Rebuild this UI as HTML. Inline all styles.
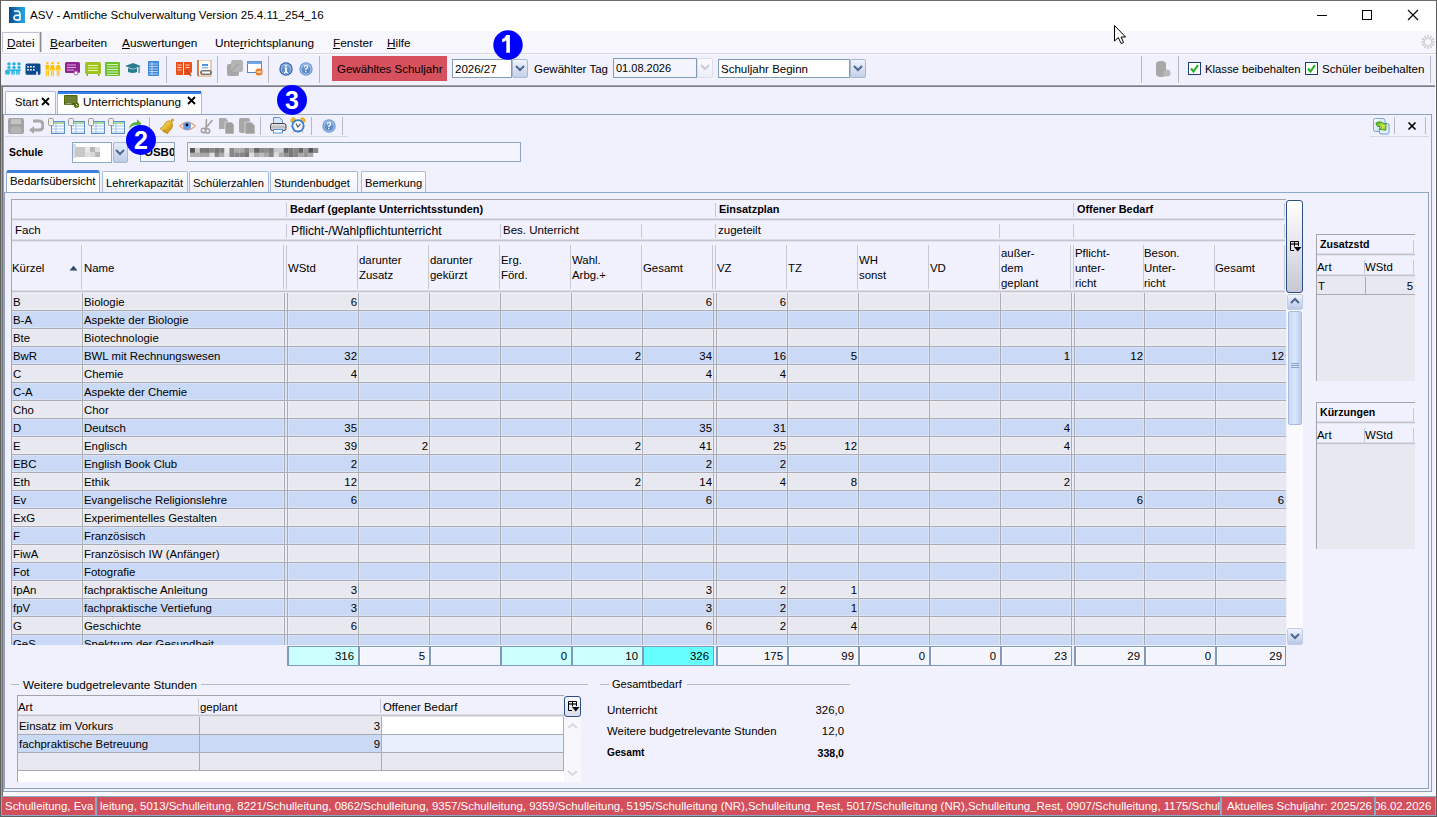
<!DOCTYPE html><html><head><meta charset="utf-8"><style>
html,body{margin:0;padding:0;}
body{width:1437px;height:817px;position:relative;overflow:hidden;background:#f1f1fd;font-family:"Liberation Sans",sans-serif;font-size:11.5px;color:#000;}
div{box-sizing:border-box;}
</style></head><body>
<div style="position:absolute;left:0px;top:0px;width:1437px;height:1px;background:#6a6a6a"></div>
<div style="position:absolute;left:0px;top:0px;width:1px;height:817px;background:#5e5e5e"></div>
<div style="position:absolute;left:1436px;top:0px;width:1px;height:817px;background:#5e5e5e"></div>
<div style="position:absolute;left:0px;top:816px;width:1437px;height:1px;background:#5e5e5e"></div>
<div style="position:absolute;left:1px;top:87px;width:1px;height:729px;background:#a0a0a0"></div>
<div style="position:absolute;left:2px;top:87px;width:1px;height:729px;background:#707070"></div>
<div style="position:absolute;left:1435px;top:87px;width:1px;height:729px;background:#fafafa"></div>
<div style="position:absolute;left:1px;top:1px;width:1435px;height:30px;background:#ffffff"></div>
<svg style="position:absolute;left:9px;top:7px" width="16" height="16" viewBox="0 0 16 16"><defs><linearGradient id="ag" x1="0" x2="1"><stop offset="0" stop-color="#0a4a8c"/><stop offset="1" stop-color="#22a8e6"/></linearGradient></defs><rect width="16" height="16" fill="url(#ag)"/><path d="M5 4.2 Q11 3 11 7 V13.5 M11 8.5 Q5 7.5 5 10.8 Q5 14 11 12.5" stroke="#fff" stroke-width="1.6" fill="none"/></svg>
<div style="position:absolute;left:30px;top:8px;font-size:11.6px;line-height:13px;color:#000;white-space:nowrap;">ASV - Amtliche Schulverwaltung Version 25.4.11_254_16</div>
<svg style="position:absolute;left:1316px;top:8px" width="110" height="16" viewBox="0 0 110 16"><line x1="1" y1="7.5" x2="11" y2="7.5" stroke="#000" stroke-width="1"/><rect x="46.5" y="2.5" width="9" height="9" fill="none" stroke="#000"/><path d="M92 2 L102 12 M102 2 L92 12" stroke="#000" stroke-width="1.1"/></svg>
<div style="position:absolute;left:1px;top:31px;width:1435px;height:22px;background:#f7f7fd"></div>
<div style="position:absolute;left:2px;top:32px;width:38px;height:20px;background:#fbfbfe;border:1px solid #c0c2d4;border-bottom:none;border-right-color:#d8d8e4;box-shadow:1px 0 0 #8c8c94,2px 0 0 #c8c8d0"></div>
<div style="position:absolute;left:7px;top:36px;font-size:11.8px;line-height:14px;color:#000;white-space:nowrap;"><u>D</u>atei</div>
<div style="position:absolute;left:50px;top:36px;font-size:11.8px;line-height:14px;color:#000;white-space:nowrap;"><u>B</u>earbeiten</div>
<div style="position:absolute;left:122px;top:36px;font-size:11.8px;line-height:14px;color:#000;white-space:nowrap;"><u>A</u>uswertungen</div>
<div style="position:absolute;left:215px;top:36px;font-size:11.8px;line-height:14px;color:#000;white-space:nowrap;">Unte<u>r</u>richtsplanung</div>
<div style="position:absolute;left:333px;top:36px;font-size:11.8px;line-height:14px;color:#000;white-space:nowrap;"><u>F</u>enster</div>
<div style="position:absolute;left:387px;top:36px;font-size:11.8px;line-height:14px;color:#000;white-space:nowrap;"><u>H</u>ilfe</div>
<svg style="position:absolute;left:1419px;top:33px" width="18" height="18" viewBox="0 0 18 18"><line x1="9" y1="2" x2="9" y2="6" stroke="#ccc" stroke-width="1.5" transform="rotate(0 9 9)"/><line x1="9" y1="2" x2="9" y2="6" stroke="#ccc" stroke-width="1.5" transform="rotate(30 9 9)"/><line x1="9" y1="2" x2="9" y2="6" stroke="#ccc" stroke-width="1.5" transform="rotate(60 9 9)"/><line x1="9" y1="2" x2="9" y2="6" stroke="#ccc" stroke-width="1.5" transform="rotate(90 9 9)"/><line x1="9" y1="2" x2="9" y2="6" stroke="#ccc" stroke-width="1.5" transform="rotate(120 9 9)"/><line x1="9" y1="2" x2="9" y2="6" stroke="#ccc" stroke-width="1.5" transform="rotate(150 9 9)"/><line x1="9" y1="2" x2="9" y2="6" stroke="#ccc" stroke-width="1.5" transform="rotate(180 9 9)"/><line x1="9" y1="2" x2="9" y2="6" stroke="#ccc" stroke-width="1.5" transform="rotate(210 9 9)"/><line x1="9" y1="2" x2="9" y2="6" stroke="#ccc" stroke-width="1.5" transform="rotate(240 9 9)"/><line x1="9" y1="2" x2="9" y2="6" stroke="#ccc" stroke-width="1.5" transform="rotate(270 9 9)"/><line x1="9" y1="2" x2="9" y2="6" stroke="#ccc" stroke-width="1.5" transform="rotate(300 9 9)"/><line x1="9" y1="2" x2="9" y2="6" stroke="#ccc" stroke-width="1.5" transform="rotate(330 9 9)"/></svg>
<div style="position:absolute;left:1px;top:53px;width:1435px;height:1px;background:#d8d6e6"></div>
<div style="position:absolute;left:1px;top:54px;width:1435px;height:1px;background:#fdfdff"></div>
<div style="position:absolute;left:1px;top:55px;width:1435px;height:30px;background:#f1f1fd"></div>
<div style="position:absolute;left:1px;top:85px;width:1434px;height:1px;background:#a0a0a8"></div>
<div style="position:absolute;left:1px;top:86px;width:1434px;height:1px;background:#7c7c84"></div>
<div style="position:absolute;left:166px;top:56px;width:1px;height:27px;background:#b8b8c0"></div>
<div style="position:absolute;left:217px;top:56px;width:1px;height:27px;background:#b8b8c0"></div>
<div style="position:absolute;left:268px;top:56px;width:1px;height:27px;background:#b8b8c0"></div>
<div style="position:absolute;left:319px;top:56px;width:1px;height:27px;background:#b8b8c0"></div>
<div style="position:absolute;left:1141px;top:56px;width:1px;height:27px;background:#b8b8c0"></div>
<div style="position:absolute;left:1178px;top:56px;width:1px;height:27px;background:#b8b8c0"></div>
<div style="position:absolute;left:1430px;top:56px;width:1px;height:27px;background:#b8b8c0"></div>
<svg style="position:absolute;left:5px;top:61px" width="16" height="16" viewBox="0 0 16 16"><defs><linearGradient id="pcy" x1="0" y1="0" x2="0" y2="1"><stop offset="0" stop-color="#22b0dc"/><stop offset="0.55" stop-color="#22b0dc"/><stop offset="1" stop-color="#5cc8e8"/></linearGradient></defs><g fill="url(#pcy)"><circle cx="4" cy="3" r="1.8"/><circle cx="9" cy="3" r="1.8"/><circle cx="14" cy="3" r="1.8"/><circle cx="4" cy="6.6" r="1.7"/><circle cx="9" cy="6.6" r="1.7"/><circle cx="14" cy="6.6" r="1.7"/><rect x="0.2" y="9" width="4.6" height="4.8" rx="1"/><rect x="2" y="8.4" width="13.8" height="1.8"/><rect x="6.3" y="9.5" width="1.5" height="4.3"/><rect x="8.3" y="9.5" width="1.5" height="4.3"/><rect x="11.2" y="9.5" width="1.5" height="4.3"/><rect x="13.2" y="9.5" width="1.5" height="4.3"/></g></svg>
<svg style="position:absolute;left:25px;top:61px" width="16" height="16" viewBox="0 0 16 16"><path d="M2 2.5 H14 Q15.5 2.5 15.5 4 V12.5 Q15.5 13.8 14.2 13.8 H12.8 V10.6 H11.2 V13.8 H2 Q0.5 13.8 0.5 12.3 V4 Q0.5 2.5 2 2.5 Z" fill="#0c4a8e"/><g fill="#fff"><rect x="2.2" y="5" width="1.6" height="1.6"/><rect x="5.1" y="5" width="1.6" height="1.6"/><rect x="8" y="5" width="1.6" height="1.6"/><rect x="2.2" y="8" width="1.6" height="1.6"/><rect x="5.1" y="8" width="1.6" height="1.6"/><rect x="8" y="8" width="1.6" height="1.6"/></g></svg>
<svg style="position:absolute;left:45px;top:61px" width="16" height="16" viewBox="0 0 16 16"><defs><linearGradient id="pyl" x1="0" y1="0" x2="0" y2="1"><stop offset="0" stop-color="#fcc208"/><stop offset="0.6" stop-color="#fcc208"/><stop offset="1" stop-color="#fde080"/></linearGradient></defs><g fill="url(#pyl)"><rect x="1.2" y="1" width="2.4" height="2.4" rx="0.8"/><rect x="6.2" y="1" width="2.4" height="2.4" rx="0.8"/><rect x="12" y="1" width="2.4" height="2.4" rx="0.8"/><rect x="0.5" y="4" width="3.8" height="5.5"/><rect x="0.8" y="9.5" width="1.4" height="6"/><rect x="2.6" y="9.5" width="1.4" height="6"/><path d="M5.8 4 H9 L10.2 10 H4.6 Z"/><rect x="6" y="10" width="1.2" height="5.5"/><rect x="7.6" y="10" width="1.2" height="5.5"/><path d="M11.6 4 H14.8 L16 10 H10.4 Z"/><rect x="11.8" y="10" width="1.2" height="5.5"/><rect x="13.4" y="10" width="1.2" height="5.5"/></g></svg>
<svg style="position:absolute;left:65px;top:61px" width="16" height="16" viewBox="0 0 16 16"><rect x="0" y="1" width="15" height="11" rx="1.5" fill="#8e2590"/><g stroke="#e0a8e0" stroke-width="1"><line x1="2" y1="4" x2="11" y2="4"/><line x1="2" y1="6.5" x2="11" y2="6.5"/><line x1="2" y1="9" x2="9" y2="9"/></g><circle cx="11" cy="12" r="2" fill="#fff" stroke="#b060b0"/></svg>
<svg style="position:absolute;left:85px;top:61px" width="16" height="16" viewBox="0 0 16 16"><rect x="0" y="1" width="16" height="12" rx="1.5" fill="#a0c41e"/><g stroke="#e8f4b0"><line x1="3" y1="4.5" x2="13" y2="4.5"/><line x1="3" y1="7" x2="13" y2="7"/><line x1="3" y1="9.5" x2="13" y2="9.5"/></g><rect x="1.5" y="13" width="1.5" height="2" fill="#88a818"/><rect x="13" y="13" width="1.5" height="2" fill="#88a818"/></svg>
<svg style="position:absolute;left:105px;top:61px" width="16" height="16" viewBox="0 0 16 16"><rect x="0" y="1" width="15" height="14" rx="1" fill="#6cc02a"/><g stroke="#d8f0c0"><line x1="2" y1="3.5" x2="13" y2="3.5"/><line x1="2" y1="6" x2="13" y2="6"/><line x1="2" y1="8.5" x2="13" y2="8.5"/><line x1="2" y1="11" x2="13" y2="11"/><line x1="2" y1="13.5" x2="13" y2="13.5"/></g></svg>
<svg style="position:absolute;left:125px;top:61px" width="16" height="16" viewBox="0 0 16 16"><path d="M0 5 L8 2 L16 5 L8 8 Z" fill="#2a7d8e"/><path d="M3 7 V11 Q8 13 12 11 V7 L8 8.5 Z" fill="#2a7d8e"/><rect x="13.5" y="6" width="1.2" height="6" fill="#2a7d8e"/></svg>
<svg style="position:absolute;left:148px;top:61px" width="11" height="15" viewBox="0 0 11 15"><rect x="0" y="0" width="11" height="15" rx="1" fill="#3d86d6"/><g stroke="#cfe2f8" stroke-width="0.8"><line x1="1" y1="3" x2="10" y2="3"/><line x1="1" y1="5.5" x2="10" y2="5.5"/><line x1="1" y1="8" x2="10" y2="8"/><line x1="1" y1="10.5" x2="10" y2="10.5"/><line x1="1" y1="13" x2="10" y2="13"/><line x1="4" y1="1" x2="4" y2="14"/></g></svg>
<svg style="position:absolute;left:176px;top:61px" width="16" height="16" viewBox="0 0 16 16"><path d="M0 1 h7 v13 h-6 q-1 0 -1 -1z M8 1 h7 q1 0 1 1 v9 l-3 3 h-5z" fill="#e9501c"/><g stroke="#fbd0c0"><line x1="1.5" y1="4" x2="5.5" y2="4"/><line x1="1.5" y1="6.5" x2="5.5" y2="6.5"/><line x1="1.5" y1="9" x2="5.5" y2="9"/><line x1="9.5" y1="4" x2="13.5" y2="4"/><line x1="9.5" y1="6.5" x2="13.5" y2="6.5"/></g><path d="M10 9 L15 15" stroke="#c04818" stroke-width="1.2"/></svg>
<svg style="position:absolute;left:197px;top:60px" width="16" height="17" viewBox="0 0 16 17"><rect x="1" y="0" width="13" height="16" fill="#fff" stroke="#d8a060"/><line x1="1" y1="0" x2="1" y2="16" stroke="#d06020" stroke-width="1.5"/><rect x="5" y="4" width="6" height="2" fill="#5090e0"/><rect x="5" y="7" width="6" height="1.5" fill="#90b8f0"/><rect x="3" y="10" width="12" height="5" rx="2.5" fill="#777"/><rect x="5" y="11.5" width="8" height="2" fill="#fff"/></svg>
<svg style="position:absolute;left:227px;top:60px" width="16" height="16" viewBox="0 0 16 16"><rect x="0" y="4" width="12" height="12" rx="2" fill="#a8a8a8"/><rect x="4" y="0" width="12" height="12" rx="2" fill="#b4b4b4"/><path d="M4 12 Q8 6 12 4" stroke="#9a9a9a" fill="none"/></svg>
<svg style="position:absolute;left:247px;top:60px" width="17" height="17" viewBox="0 0 17 17"><rect x="0.5" y="1.5" width="14" height="11" fill="#fff" stroke="#4a88d0"/><rect x="0.5" y="1.5" width="14" height="2.5" fill="#7aa8e0"/><circle cx="12" cy="12" r="3.6" fill="#f07820"/><rect x="9.8" y="11.3" width="4.4" height="1.4" fill="#fff"/></svg>
<svg style="position:absolute;left:279px;top:62px" width="14" height="14" viewBox="0 0 14 14"><defs><linearGradient id="ig27962" x1="0" y1="0" x2="0" y2="1"><stop offset="0" stop-color="#86acdc"/><stop offset="1" stop-color="#4a78b8"/></linearGradient></defs><circle cx="7" cy="7" r="6.7" fill="#3464b0"/><circle cx="7" cy="7" r="5.4" fill="#c0d6ee"/><circle cx="7" cy="7" r="4.7" fill="url(#ig27962)"/><rect x="6.1" y="3" width="1.8" height="1.5" fill="#fff"/><path d="M5.8 5.6 H7.9 V9.7 H8.9 V10.9 H5.1 V9.7 H6.1 V6.7 H5.8 Z" fill="#fff"/></svg>
<svg style="position:absolute;left:299px;top:62px" width="14" height="14" viewBox="0 0 14 14"><defs><linearGradient id="ig29962" x1="0" y1="0" x2="0" y2="1"><stop offset="0" stop-color="#86acdc"/><stop offset="1" stop-color="#4a78b8"/></linearGradient></defs><circle cx="7" cy="7" r="6.7" fill="#6c9ad8"/><circle cx="7" cy="7" r="5.4" fill="#c0d6ee"/><circle cx="7" cy="7" r="4.7" fill="url(#ig29962)"/><path d="M4.8 5.2 Q4.8 2.9 7 2.9 Q9.3 2.9 9.3 5 Q9.3 6.3 7.9 6.9 Q7.3 7.2 7.3 8.2 H6.1 Q6.1 6.6 7.2 6 Q8 5.6 8 5 Q8 4.1 7 4.1 Q6 4.1 6 5.2 Z" fill="#fff"/><rect x="6.1" y="9" width="1.3" height="1.4" fill="#fff"/></svg>
<div style="position:absolute;left:332px;top:56px;width:115px;height:25px;background:#d6505e"></div>
<div style="position:absolute;left:337px;top:63px;font-size:11.5px;line-height:13px;color:#000;white-space:nowrap;">Gewähltes Schuljahr</div>
<div style="position:absolute;left:452px;top:59px;width:60px;height:19px;background:#fff;border:1px solid #7f9db9"></div>
<div style="position:absolute;left:455px;top:63px;font-size:11.5px;line-height:13px;color:#000;white-space:nowrap;">2026/27</div>
<div style="position:absolute;left:512px;top:59px;width:16px;height:19px;background:linear-gradient(#eef2fb,#c4d0ea);border:1px solid #a8b8d0;border-radius:2px"></div>
<svg style="position:absolute;left:515px;top:64px" width="10" height="8" viewBox="0 0 10 8"><path d="M1 2 L5 6 L9 2" stroke="#4a6890" stroke-width="2" fill="none"/></svg>
<div style="position:absolute;left:534px;top:63px;font-size:11.5px;line-height:13px;color:#000;white-space:nowrap;">Gewählter Tag</div>
<div style="position:absolute;left:613px;top:58px;width:84px;height:20px;background:#f4f4fc;border:1px solid #7f9db9"></div>
<div style="position:absolute;left:616px;top:62px;font-size:11.0px;line-height:13px;color:#000;white-space:nowrap;">01.08.2026</div>
<div style="position:absolute;left:697px;top:58px;width:16px;height:20px;background:linear-gradient(#fbfbff,#eceef8);border:1px solid #dcdfe8;border-radius:2px"></div>
<svg style="position:absolute;left:700px;top:63px" width="10" height="8" viewBox="0 0 10 8"><path d="M1 2 L5 6 L9 2" stroke="#c8ccd8" stroke-width="2" fill="none"/></svg>
<div style="position:absolute;left:718px;top:59px;width:132px;height:19px;background:#fff;border:1px solid #7f9db9"></div>
<div style="position:absolute;left:721px;top:63px;font-size:11.5px;line-height:13px;color:#000;white-space:nowrap;">Schuljahr Beginn</div>
<div style="position:absolute;left:850px;top:59px;width:16px;height:19px;background:linear-gradient(#eef2fb,#c4d0ea);border:1px solid #a8b8d0;border-radius:2px"></div>
<svg style="position:absolute;left:853px;top:64px" width="10" height="8" viewBox="0 0 10 8"><path d="M1 2 L5 6 L9 2" stroke="#4a6890" stroke-width="2" fill="none"/></svg>
<svg style="position:absolute;left:1155px;top:61px" width="16" height="16" viewBox="0 0 16 16"><path d="M1 3 Q1 0 6 0 Q11 0 11 3 V13 Q11 16 6 16 Q1 16 1 13 Z" fill="#a8a8a8"/><circle cx="12" cy="12" r="3.5" fill="#b8b8b8"/></svg>
<svg style="position:absolute;left:1188px;top:62px" width="13" height="13" viewBox="0 0 13 13"><rect x="0.5" y="0.5" width="12" height="12" fill="#fff" stroke="#1c3e74"/><path d="M3 6.5 L5.5 9.5 L10 3" stroke="#20b020" stroke-width="2" fill="none"/></svg>
<div style="position:absolute;left:1205px;top:63px;font-size:11.3px;line-height:13px;color:#000;white-space:nowrap;">Klasse beibehalten</div>
<svg style="position:absolute;left:1305px;top:62px" width="13" height="13" viewBox="0 0 13 13"><rect x="0.5" y="0.5" width="12" height="12" fill="#fff" stroke="#1c3e74"/><path d="M3 6.5 L5.5 9.5 L10 3" stroke="#20b020" stroke-width="2" fill="none"/></svg>
<div style="position:absolute;left:1322px;top:62px;font-size:11.6px;line-height:13px;color:#000;white-space:nowrap;">Schüler beibehalten</div>
<div style="position:absolute;left:5px;top:91px;width:51px;height:24px;background:linear-gradient(#ffffff,#f4f6fc);border:1px solid #a9bad4;border-bottom:none;border-radius:2px 2px 0 0"></div>
<div style="position:absolute;left:15px;top:96px;font-size:11.1px;line-height:13px;color:#000;white-space:nowrap;">Start</div>
<svg style="position:absolute;left:41px;top:97px" width="9" height="9" viewBox="0 0 9 9"><path d="M1 1 L8 8 M8 1 L1 8" stroke="#000" stroke-width="1.8"/></svg>
<div style="position:absolute;left:57px;top:91px;width:145px;height:24px;background:#fff;border:1px solid #a9bad4;border-top:3px solid #3a80ec;border-bottom:none;border-radius:3px 3px 0 0;box-shadow:inset 0 0 0 0 #fff"></div>
<div style="position:absolute;left:58px;top:91px;width:143px;height:1px;background:#1f5cc0"></div>
<svg style="position:absolute;left:64px;top:95px" width="16" height="16" viewBox="0 0 16 16"><rect x="0" y="0" width="13.5" height="10" rx="1" fill="#4c6606"/><rect x="2.5" y="1.2" width="10" height="6.8" fill="#6e7e34"/><g fill="#b8c890"><rect x="1.2" y="1.5" width="1" height="1"/><rect x="1.2" y="3.5" width="1" height="1"/><rect x="1.2" y="5.5" width="1" height="1"/><rect x="1.5" y="8.3" width="6" height="1"/></g><circle cx="12.5" cy="10.2" r="2.6" fill="#4c6606"/><path d="M11.5 9 L13.5 10.2 L12.5 11.5" stroke="#fff" stroke-width="0.8" fill="none"/></svg>
<div style="position:absolute;left:83px;top:95px;font-size:11.7px;line-height:14px;color:#000;white-space:nowrap;">Unterrichtsplanung</div>
<svg style="position:absolute;left:187px;top:96px" width="9" height="9" viewBox="0 0 9 9"><path d="M1 1 L8 8 M8 1 L1 8" stroke="#000" stroke-width="1.8"/></svg>
<div style="position:absolute;left:3px;top:114px;width:1429px;height:678px;background:#fcfcff;border:1px solid #8ea2be"></div>
<div style="position:absolute;left:4px;top:115px;width:1427px;height:676px;background:#f1f1fd"></div>
<div style="position:absolute;left:4px;top:192px;width:1425px;height:597px;background:#f1f1fd;border:1px solid #8ea2be;border-width:0 1px 1px 1px"></div>
<div style="position:absolute;left:3px;top:792px;width:1432px;height:4px;background:#fafafe"></div>
<div style="position:absolute;left:5px;top:136px;width:343px;height:1px;background:#d4d8e4"></div>
<div style="position:absolute;left:149px;top:117px;width:1px;height:18px;background:#b8b8c0"></div>
<div style="position:absolute;left:260px;top:117px;width:1px;height:18px;background:#b8b8c0"></div>
<div style="position:absolute;left:311px;top:117px;width:1px;height:18px;background:#b8b8c0"></div>
<div style="position:absolute;left:342px;top:117px;width:1px;height:18px;background:#b8b8c0"></div>
<svg style="position:absolute;left:8px;top:118px" width="16" height="16" viewBox="0 0 16 16"><rect x="0" y="0" width="16" height="16" rx="2" fill="#a4a4a4"/><rect x="3" y="1" width="10" height="5" fill="#c4c4c4"/><rect x="3" y="9" width="10" height="6" fill="#b4b4b4"/></svg>
<svg style="position:absolute;left:29px;top:118px" width="15" height="16" viewBox="0 0 15 16"><path d="M4 3 H10 Q14 3 14 7.5 Q14 12 10 12 H4" stroke="#a8a8a8" stroke-width="3" fill="none"/><path d="M0 12 L5 8 V16 Z" fill="#a8a8a8"/></svg>
<svg style="position:absolute;left:48px;top:118px" width="17" height="16" viewBox="0 0 17 16"><rect x="3.5" y="3.5" width="13" height="12" fill="#fff" stroke="#5a90d0"/><line x1="4" y1="5" x2="16" y2="5" stroke="#5ab040"/><g stroke="#8ab8e8" stroke-width="0.8"><line x1="4" y1="8" x2="16" y2="8"/><line x1="4" y1="11" x2="16" y2="11"/><line x1="4" y1="14" x2="16" y2="14"/><line x1="8" y1="5" x2="8" y2="15"/></g><rect x="0.5" y="0.5" width="5" height="7" rx="1" fill="#f0f0f0" stroke="#9a9a9a"/></svg>
<svg style="position:absolute;left:68px;top:118px" width="17" height="16" viewBox="0 0 17 16"><rect x="3.5" y="3.5" width="13" height="12" fill="#fff" stroke="#5a90d0"/><line x1="4" y1="5" x2="16" y2="5" stroke="#5ab040"/><g stroke="#8ab8e8" stroke-width="0.8"><line x1="4" y1="8" x2="16" y2="8"/><line x1="4" y1="11" x2="16" y2="11"/><line x1="4" y1="14" x2="16" y2="14"/><line x1="8" y1="5" x2="8" y2="15"/></g><rect x="0.5" y="0.5" width="5" height="7" rx="1" fill="#f0f0f0" stroke="#9a9a9a"/></svg>
<svg style="position:absolute;left:88px;top:118px" width="17" height="16" viewBox="0 0 17 16"><rect x="3.5" y="3.5" width="13" height="12" fill="#fff" stroke="#5a90d0"/><line x1="4" y1="5" x2="16" y2="5" stroke="#5ab040"/><g stroke="#8ab8e8" stroke-width="0.8"><line x1="4" y1="8" x2="16" y2="8"/><line x1="4" y1="11" x2="16" y2="11"/><line x1="4" y1="14" x2="16" y2="14"/><line x1="8" y1="5" x2="8" y2="15"/></g><rect x="0.5" y="0.5" width="5" height="7" rx="1" fill="#f0f0f0" stroke="#9a9a9a"/></svg>
<svg style="position:absolute;left:108px;top:118px" width="17" height="16" viewBox="0 0 17 16"><rect x="3.5" y="3.5" width="13" height="12" fill="#fff" stroke="#5a90d0"/><line x1="4" y1="5" x2="16" y2="5" stroke="#5ab040"/><g stroke="#8ab8e8" stroke-width="0.8"><line x1="4" y1="8" x2="16" y2="8"/><line x1="4" y1="11" x2="16" y2="11"/><line x1="4" y1="14" x2="16" y2="14"/><line x1="8" y1="5" x2="8" y2="15"/></g><rect x="0.5" y="0.5" width="5" height="7" rx="1" fill="#f0f0f0" stroke="#9a9a9a"/></svg>
<svg style="position:absolute;left:128px;top:118px" width="14" height="12" viewBox="0 0 14 12"><path d="M1 11 Q2 4 9 4 V1 L13.5 5.5 L9 10 V7 Q4 7 1 11Z" fill="#58b048"/></svg>
<svg style="position:absolute;left:159px;top:118px" width="16" height="16" viewBox="0 0 16 16"><defs><linearGradient id="bellg" x1="0" y1="0" x2="1" y2="1"><stop offset="0" stop-color="#fff2a0"/><stop offset="0.5" stop-color="#e8b828"/><stop offset="1" stop-color="#b07a10"/></linearGradient></defs><circle cx="13.5" cy="2" r="1.5" fill="#d8a020"/><path d="M12.5 3 Q7 2 5 7 Q4 9 1 10.5 L8.5 16 Q9.5 13 11.5 12 Q15 9 12.5 3 Z" fill="url(#bellg)" stroke="#b88418" stroke-width="0.7"/><circle cx="5.5" cy="13" r="1.6" fill="#c89020"/></svg>
<svg style="position:absolute;left:179px;top:120px" width="17" height="12" viewBox="0 0 17 12"><path d="M0.8 6 Q8.5 -1.5 16.2 6 Q8.5 13.5 0.8 6 Z" fill="#fff" stroke="#e8a888" stroke-width="1.3"/><circle cx="8" cy="6" r="4" fill="#6a9ee6"/><circle cx="8" cy="5" r="1.4" fill="#000"/></svg>
<svg style="position:absolute;left:200px;top:118px" width="14" height="16" viewBox="0 0 14 16"><path d="M6.5 1 L6 11 M12.5 2 L5 11" stroke="#a0a0a0" stroke-width="1.5"/><circle cx="3.5" cy="12.5" r="2.2" fill="none" stroke="#a0a0a0" stroke-width="1.5"/><circle cx="7.5" cy="13" r="2.2" fill="none" stroke="#a0a0a0" stroke-width="1.5"/></svg>
<svg style="position:absolute;left:219px;top:118px" width="16" height="16" viewBox="0 0 16 16"><path d="M0 0 H6.5 L9 2.5 V11 H0 Z" fill="#ababab"/><path d="M6 4 H12.5 L15 6.5 V16 H6 Z" fill="#a0a0a0" stroke="#f1f1fd" stroke-width="0.6"/></svg>
<svg style="position:absolute;left:239px;top:118px" width="17" height="16" viewBox="0 0 17 16"><rect x="0" y="0" width="11" height="15" rx="2" fill="#a8a8a8"/><path d="M6 4 H12.5 L16 7.5 V16 H6 Z" fill="#a0a0a0" stroke="#f1f1fd" stroke-width="0.6"/></svg>
<svg style="position:absolute;left:270px;top:117px" width="17" height="17" viewBox="0 0 17 17"><defs><linearGradient id="prg" x1="0" y1="0" x2="0" y2="1"><stop offset="0" stop-color="#f4f4f4"/><stop offset="0.5" stop-color="#b8b8b8"/><stop offset="1" stop-color="#e8e8e8"/></linearGradient></defs><path d="M3.5 0.5 H9.5 L12.5 3.5 V7 H3.5 Z" fill="#d8e8fa" stroke="#4a88d8" stroke-width="0.9"/><rect x="0.5" y="6.5" width="15.5" height="7" rx="2" fill="url(#prg)" stroke="#333" stroke-width="0.9"/><rect x="3.5" y="12.5" width="9" height="3.5" fill="#fff" stroke="#4a88d8" stroke-width="0.9"/></svg>
<svg style="position:absolute;left:290px;top:117px" width="16" height="17" viewBox="0 0 16 17"><ellipse cx="3" cy="3" rx="2.6" ry="2" transform="rotate(-40 3 3)" fill="#f0b830" stroke="#d89810" stroke-width="0.5"/><ellipse cx="13" cy="3" rx="2.6" ry="2" transform="rotate(40 13 3)" fill="#f0b830" stroke="#d89810" stroke-width="0.5"/><circle cx="8" cy="8.8" r="6.6" fill="#3a7ccc"/><circle cx="8" cy="8.8" r="4.8" fill="#f4f8fe"/><path d="M6 6.5 L7.8 10 L10.5 6.8" stroke="#555" stroke-width="1.1" fill="none"/><path d="M3 15.5 L4.5 14 M13 15.5 L11.5 14" stroke="#999" stroke-width="1"/></svg>
<svg style="position:absolute;left:322px;top:119px" width="14" height="14" viewBox="0 0 14 14"><defs><linearGradient id="ig322119" x1="0" y1="0" x2="0" y2="1"><stop offset="0" stop-color="#86acdc"/><stop offset="1" stop-color="#4a78b8"/></linearGradient></defs><circle cx="7" cy="7" r="6.7" fill="#6c9ad8"/><circle cx="7" cy="7" r="5.4" fill="#c0d6ee"/><circle cx="7" cy="7" r="4.7" fill="url(#ig322119)"/><path d="M4.8 5.2 Q4.8 2.9 7 2.9 Q9.3 2.9 9.3 5 Q9.3 6.3 7.9 6.9 Q7.3 7.2 7.3 8.2 H6.1 Q6.1 6.6 7.2 6 Q8 5.6 8 5 Q8 4.1 7 4.1 Q6 4.1 6 5.2 Z" fill="#fff"/><rect x="6.1" y="9" width="1.3" height="1.4" fill="#fff"/></svg>
<svg style="position:absolute;left:1373px;top:118px" width="17" height="17" viewBox="0 0 17 17"><defs><linearGradient id="rfd" x1="0" y1="0" x2="1" y2="1"><stop offset="0" stop-color="#ffffff"/><stop offset="1" stop-color="#b8d4f4"/></linearGradient><linearGradient id="rfa" x1="0" y1="0" x2="1" y2="1"><stop offset="0" stop-color="#30a020"/><stop offset="0.6" stop-color="#d8f040"/><stop offset="1" stop-color="#60c020"/></linearGradient></defs><rect x="0.5" y="0.5" width="11.5" height="13" rx="2" fill="url(#rfd)" stroke="#7aa4dc"/><rect x="6.5" y="5.5" width="9.5" height="10.5" rx="1.5" fill="#e4eefa" stroke="#6a9ad8"/><path d="M2.8 5.2 Q7.5 1.8 11.5 6.5 L13.2 5.2 L12.8 12.2 L6.5 11.2 L8.8 9.5 Q7 7.5 4.5 8.5 Z" fill="url(#rfa)" stroke="#2a8a10" stroke-width="0.8"/></svg>
<div style="position:absolute;left:1394px;top:117px;width:1px;height:17px;background:#b8b8c0"></div>
<div style="position:absolute;left:1425px;top:117px;width:1px;height:17px;background:#b8b8c0"></div>
<svg style="position:absolute;left:1407px;top:121px" width="10" height="10" viewBox="0 0 10 10"><path d="M1.5 1.5 L8.5 8.5 M8.5 1.5 L1.5 8.5" stroke="#000" stroke-width="1.7"/></svg>
<div style="position:absolute;left:1370px;top:136px;width:59px;height:1px;background:#d4d8e4"></div>
<div style="position:absolute;left:9px;top:147px;font-size:10.4px;line-height:12px;color:#000;font-weight:bold;white-space:nowrap;">Schule</div>
<div style="position:absolute;left:72px;top:142px;width:40px;height:21px;background:#fff;border:1px solid #8ea8c8"></div>
<div style="position:absolute;left:73px;top:144px;width:3px;height:14px;background:#d8e0ec"></div>
<svg style="position:absolute;left:75px;top:147px" width="25" height="10" viewBox="0 0 25 10"><rect x="0" y="0" width="10" height="10" fill="#c8c8c8"/><rect x="10" y="0" width="5" height="5" fill="#e8e8e8"/><rect x="10" y="5" width="5" height="5" fill="#e0e0e0"/><rect x="15" y="0" width="5" height="5" fill="#b8b8b8"/><rect x="15" y="5" width="5" height="5" fill="#d8d8d8"/><rect x="20" y="0" width="5" height="5" fill="#e0e0e0"/><rect x="20" y="5" width="5" height="5" fill="#b8b8b8"/></svg>
<div style="position:absolute;left:113px;top:142px;width:15px;height:21px;background:linear-gradient(#e8eef8,#bccbe6);border:1px solid #a8b8d0;border-radius:2px"></div>
<svg style="position:absolute;left:115px;top:148px" width="10" height="8" viewBox="0 0 10 8"><path d="M1 2 L5 6 L9 2" stroke="#4a6890" stroke-width="2" fill="none"/></svg>
<div style="position:absolute;left:140px;top:142px;width:35px;height:20px;background:#f4f4fc;border:1px solid #8ea8c8;overflow:hidden"><div style="position:absolute;left:3px;top:3px;font-size:11.5px;line-height:13px;font-weight:bold;white-space:nowrap">OSB0</div></div>
<div style="position:absolute;left:187px;top:142px;width:334px;height:20px;background:#f4f4fc;border:1px solid #8ea8c8"></div>
<svg style="position:absolute;left:190px;top:148px" width="129" height="9" viewBox="0 0 129 9"><rect x="0.00" y="0" width="5" height="5" fill="#555"/><rect x="0.00" y="4.7" width="5" height="4.3" fill="#b0b0b0"/><rect x="4.93" y="0" width="5" height="5" fill="#ccc"/><rect x="4.93" y="4.7" width="5" height="4.3" fill="#b0b0b0"/><rect x="9.86" y="0" width="5" height="5" fill="#777"/><rect x="9.86" y="4.7" width="5" height="4.3" fill="#a8a8a8"/><rect x="14.79" y="0" width="5" height="5" fill="#777"/><rect x="14.79" y="4.7" width="5" height="4.3" fill="#a8a8a8"/><rect x="19.72" y="0" width="5" height="5" fill="#888"/><rect x="19.72" y="4.7" width="5" height="4.3" fill="#ddd"/><rect x="24.65" y="0" width="5" height="5" fill="#777"/><rect x="24.65" y="4.7" width="5" height="4.3" fill="#888"/><rect x="29.58" y="0" width="5" height="5" fill="#808080"/><rect x="29.58" y="4.7" width="5" height="4.3" fill="#aaa"/><rect x="34.51" y="0" width="5" height="5" fill="#eee"/><rect x="34.51" y="4.7" width="5" height="4.3" fill="#e0e0e8"/><rect x="39.44" y="0" width="5" height="5" fill="#888"/><rect x="39.44" y="4.7" width="5" height="4.3" fill="#888"/><rect x="44.37" y="0" width="5" height="5" fill="#aaa"/><rect x="44.37" y="4.7" width="5" height="4.3" fill="#888"/><rect x="49.30" y="0" width="5" height="5" fill="#aaa"/><rect x="49.30" y="4.7" width="5" height="4.3" fill="#888"/><rect x="54.23" y="0" width="5" height="5" fill="#888"/><rect x="54.23" y="4.7" width="5" height="4.3" fill="#777"/><rect x="59.16" y="0" width="5" height="5" fill="#b0b0b0"/><rect x="59.16" y="4.7" width="5" height="4.3" fill="#ddd"/><rect x="64.09" y="0" width="5" height="5" fill="#666"/><rect x="64.09" y="4.7" width="5" height="4.3" fill="#aaa"/><rect x="69.02" y="0" width="5" height="5" fill="#888"/><rect x="69.02" y="4.7" width="5" height="4.3" fill="#bbb"/><rect x="73.95" y="0" width="5" height="5" fill="#909090"/><rect x="73.95" y="4.7" width="5" height="4.3" fill="#aaa"/><rect x="78.88" y="0" width="5" height="5" fill="#808080"/><rect x="78.88" y="4.7" width="5" height="4.3" fill="#888"/><rect x="83.81" y="0" width="5" height="5" fill="#c8c8d0"/><rect x="83.81" y="4.7" width="5" height="4.3" fill="#ddd"/><rect x="88.74" y="0" width="5" height="5" fill="#c8c8d0"/><rect x="88.74" y="4.7" width="5" height="4.3" fill="#aaa"/><rect x="93.67" y="0" width="5" height="5" fill="#666"/><rect x="93.67" y="4.7" width="5" height="4.3" fill="#909090"/><rect x="98.60" y="0" width="5" height="5" fill="#7a7a7a"/><rect x="98.60" y="4.7" width="5" height="4.3" fill="#777"/><rect x="103.53" y="0" width="5" height="5" fill="#8a8a8a"/><rect x="103.53" y="4.7" width="5" height="4.3" fill="#888"/><rect x="108.46" y="0" width="5" height="5" fill="#666"/><rect x="108.46" y="4.7" width="5" height="4.3" fill="#aaa"/><rect x="113.39" y="0" width="5" height="5" fill="#999"/><rect x="113.39" y="4.7" width="5" height="4.3" fill="#999"/><rect x="118.32" y="0" width="5" height="5" fill="#555"/><rect x="118.32" y="4.7" width="5" height="4.3" fill="#aaa"/><rect x="123.25" y="0" width="5" height="5" fill="#888"/></svg>
<div style="position:absolute;left:6px;top:170px;width:94px;height:23px;background:#fff;border:1px solid #8ea8c8;border-top:3px solid #3c7ee0;border-bottom:none;border-radius:3px 3px 0 0"></div>
<div style="position:absolute;left:10px;top:175px;font-size:11.4px;line-height:13px;color:#000;white-space:nowrap;">Bedarfsübersicht</div>
<div style="position:absolute;left:102px;top:171px;width:86px;height:21px;background:linear-gradient(#fefeff,#f0f2fa);border:1px solid #a9bad4;border-bottom:none;border-radius:2px 2px 0 0"></div>
<div style="position:absolute;left:106px;top:177px;font-size:11.2px;line-height:13px;color:#000;white-space:nowrap;">Lehrerkapazität</div>
<div style="position:absolute;left:189px;top:171px;width:80px;height:21px;background:linear-gradient(#fefeff,#f0f2fa);border:1px solid #a9bad4;border-bottom:none;border-radius:2px 2px 0 0"></div>
<div style="position:absolute;left:193px;top:177px;font-size:11.2px;line-height:13px;color:#000;white-space:nowrap;">Schülerzahlen</div>
<div style="position:absolute;left:270px;top:171px;width:88px;height:21px;background:linear-gradient(#fefeff,#f0f2fa);border:1px solid #a9bad4;border-bottom:none;border-radius:2px 2px 0 0"></div>
<div style="position:absolute;left:274px;top:177px;font-size:11.2px;line-height:13px;color:#000;white-space:nowrap;">Stundenbudget</div>
<div style="position:absolute;left:361px;top:171px;width:65px;height:21px;background:linear-gradient(#fefeff,#f0f2fa);border:1px solid #a9bad4;border-bottom:none;border-radius:2px 2px 0 0"></div>
<div style="position:absolute;left:365px;top:177px;font-size:11.2px;line-height:13px;color:#000;white-space:nowrap;">Bemerkung</div>
<div style="position:absolute;left:4px;top:192px;width:1425px;height:1px;background:#8ea8c8"></div>
<div style="position:absolute;left:11px;top:199px;width:1275px;height:1px;background:#a4a4ac"></div>
<div style="position:absolute;left:11px;top:199px;width:1px;height:446px;background:#a4a4ac"></div>
<div style="position:absolute;left:12px;top:200px;width:1273px;height:92px;background:#f1f1fd"></div>
<div style="position:absolute;left:12px;top:218px;width:1273px;height:1px;background:#dcdce4"></div>
<div style="position:absolute;left:12px;top:219px;width:1273px;height:1px;background:#c4c4cc"></div>
<div style="position:absolute;left:12px;top:220px;width:1273px;height:1px;background:#e4e4ec"></div>
<div style="position:absolute;left:12px;top:239px;width:1273px;height:1px;background:#dcdce4"></div>
<div style="position:absolute;left:12px;top:240px;width:1273px;height:1px;background:#c4c4cc"></div>
<div style="position:absolute;left:12px;top:241px;width:1273px;height:1px;background:#e4e4ec"></div>
<div style="position:absolute;left:12px;top:290px;width:1273px;height:1px;background:#dcdce4"></div>
<div style="position:absolute;left:12px;top:291px;width:1273px;height:1px;background:#c4c4cc"></div>
<div style="position:absolute;left:12px;top:292px;width:1273px;height:1px;background:#e4e4ec"></div>
<div style="position:absolute;left:286px;top:203px;width:1px;height:14px;background:#c8c8d0"></div>
<div style="position:absolute;left:715px;top:203px;width:1px;height:14px;background:#c8c8d0"></div>
<div style="position:absolute;left:1073px;top:203px;width:1px;height:14px;background:#c8c8d0"></div>
<div style="position:absolute;left:286px;top:224px;width:1px;height:14px;background:#c8c8d0"></div>
<div style="position:absolute;left:500px;top:224px;width:1px;height:14px;background:#c8c8d0"></div>
<div style="position:absolute;left:641px;top:224px;width:1px;height:14px;background:#c8c8d0"></div>
<div style="position:absolute;left:715px;top:224px;width:1px;height:14px;background:#c8c8d0"></div>
<div style="position:absolute;left:999px;top:224px;width:1px;height:14px;background:#c8c8d0"></div>
<div style="position:absolute;left:1073px;top:224px;width:1px;height:14px;background:#c8c8d0"></div>
<div style="position:absolute;left:1284px;top:203px;width:1px;height:14px;background:#c8c8d0"></div>
<div style="position:absolute;left:1284px;top:224px;width:1px;height:14px;background:#c8c8d0"></div>
<div style="position:absolute;left:290px;top:203px;font-size:10.9px;line-height:13px;color:#000;font-weight:bold;white-space:nowrap;">Bedarf (geplante Unterrichtsstunden)</div>
<div style="position:absolute;left:719px;top:203px;font-size:10.9px;line-height:13px;color:#000;font-weight:bold;white-space:nowrap;">Einsatzplan</div>
<div style="position:absolute;left:1077px;top:203px;font-size:10.9px;line-height:13px;color:#000;font-weight:bold;white-space:nowrap;">Offener Bedarf</div>
<div style="position:absolute;left:15px;top:224px;font-size:11.5px;line-height:13px;color:#000;white-space:nowrap;">Fach</div>
<div style="position:absolute;left:291px;top:224px;font-size:12.2px;line-height:14px;color:#000;white-space:nowrap;">Pflicht-/Wahlpflichtunterricht</div>
<div style="position:absolute;left:503px;top:224px;font-size:11.5px;line-height:13px;color:#000;white-space:nowrap;">Bes. Unterricht</div>
<div style="position:absolute;left:718px;top:224px;font-size:11.5px;line-height:13px;color:#000;white-space:nowrap;">zugeteilt</div>
<div style="position:absolute;left:81px;top:245px;width:1px;height:44px;background:#c8c8d0"></div>
<div style="position:absolute;left:283px;top:245px;width:1px;height:44px;background:#c8c8d0"></div>
<div style="position:absolute;left:286px;top:245px;width:1px;height:44px;background:#c8c8d0"></div>
<div style="position:absolute;left:357px;top:245px;width:1px;height:44px;background:#c8c8d0"></div>
<div style="position:absolute;left:428px;top:245px;width:1px;height:44px;background:#c8c8d0"></div>
<div style="position:absolute;left:499px;top:245px;width:1px;height:44px;background:#c8c8d0"></div>
<div style="position:absolute;left:570px;top:245px;width:1px;height:44px;background:#c8c8d0"></div>
<div style="position:absolute;left:641px;top:245px;width:1px;height:44px;background:#c8c8d0"></div>
<div style="position:absolute;left:712px;top:245px;width:1px;height:44px;background:#c8c8d0"></div>
<div style="position:absolute;left:715px;top:245px;width:1px;height:44px;background:#c8c8d0"></div>
<div style="position:absolute;left:786px;top:245px;width:1px;height:44px;background:#c8c8d0"></div>
<div style="position:absolute;left:857px;top:245px;width:1px;height:44px;background:#c8c8d0"></div>
<div style="position:absolute;left:928px;top:245px;width:1px;height:44px;background:#c8c8d0"></div>
<div style="position:absolute;left:999px;top:245px;width:1px;height:44px;background:#c8c8d0"></div>
<div style="position:absolute;left:1070px;top:245px;width:1px;height:44px;background:#c8c8d0"></div>
<div style="position:absolute;left:1073px;top:245px;width:1px;height:44px;background:#c8c8d0"></div>
<div style="position:absolute;left:1143px;top:245px;width:1px;height:44px;background:#c8c8d0"></div>
<div style="position:absolute;left:1214px;top:245px;width:1px;height:44px;background:#c8c8d0"></div>
<div style="position:absolute;left:1284px;top:245px;width:1px;height:44px;background:#c8c8d0"></div>
<div style="position:absolute;left:12px;top:262px;font-size:11.4px;line-height:13px;color:#000;white-space:nowrap;">Kürzel</div>
<svg style="position:absolute;left:69px;top:265px" width="10" height="6" viewBox="0 0 10 6"><path d="M0.5 5.5 L4.5 0.8 L8.5 5.5 Z" fill="#2c4a66"/></svg>
<div style="position:absolute;left:84px;top:262px;font-size:11.4px;line-height:13px;color:#000;white-space:nowrap;">Name</div>
<div style="position:absolute;left:288px;top:262px;font-size:11.4px;line-height:13px;color:#000;white-space:nowrap;">WStd</div>
<div style="position:absolute;left:359px;top:254px;font-size:11.4px;line-height:13px;color:#000;white-space:nowrap;">darunter</div>
<div style="position:absolute;left:359px;top:269px;font-size:11.4px;line-height:13px;color:#000;white-space:nowrap;">Zusatz</div>
<div style="position:absolute;left:430px;top:254px;font-size:11.4px;line-height:13px;color:#000;white-space:nowrap;">darunter</div>
<div style="position:absolute;left:430px;top:269px;font-size:11.4px;line-height:13px;color:#000;white-space:nowrap;">gekürzt</div>
<div style="position:absolute;left:501px;top:254px;font-size:11.4px;line-height:13px;color:#000;white-space:nowrap;">Erg.</div>
<div style="position:absolute;left:501px;top:269px;font-size:11.4px;line-height:13px;color:#000;white-space:nowrap;">Förd.</div>
<div style="position:absolute;left:572px;top:254px;font-size:11.4px;line-height:13px;color:#000;white-space:nowrap;">Wahl.</div>
<div style="position:absolute;left:572px;top:269px;font-size:11.4px;line-height:13px;color:#000;white-space:nowrap;">Arbg.+</div>
<div style="position:absolute;left:643px;top:262px;font-size:11.4px;line-height:13px;color:#000;white-space:nowrap;">Gesamt</div>
<div style="position:absolute;left:717px;top:262px;font-size:11.4px;line-height:13px;color:#000;white-space:nowrap;">VZ</div>
<div style="position:absolute;left:788px;top:262px;font-size:11.4px;line-height:13px;color:#000;white-space:nowrap;">TZ</div>
<div style="position:absolute;left:859px;top:254px;font-size:11.4px;line-height:13px;color:#000;white-space:nowrap;">WH</div>
<div style="position:absolute;left:859px;top:269px;font-size:11.4px;line-height:13px;color:#000;white-space:nowrap;">sonst</div>
<div style="position:absolute;left:930px;top:262px;font-size:11.4px;line-height:13px;color:#000;white-space:nowrap;">VD</div>
<div style="position:absolute;left:1001px;top:247px;font-size:11.4px;line-height:13px;color:#000;white-space:nowrap;">außer-</div>
<div style="position:absolute;left:1001px;top:262px;font-size:11.4px;line-height:13px;color:#000;white-space:nowrap;">dem</div>
<div style="position:absolute;left:1001px;top:277px;font-size:11.4px;line-height:13px;color:#000;white-space:nowrap;">geplant</div>
<div style="position:absolute;left:1075px;top:247px;font-size:11.4px;line-height:13px;color:#000;white-space:nowrap;">Pflicht-</div>
<div style="position:absolute;left:1075px;top:262px;font-size:11.4px;line-height:13px;color:#000;white-space:nowrap;">unter-</div>
<div style="position:absolute;left:1075px;top:277px;font-size:11.4px;line-height:13px;color:#000;white-space:nowrap;">richt</div>
<div style="position:absolute;left:1144px;top:247px;font-size:11.4px;line-height:13px;color:#000;white-space:nowrap;">Beson.</div>
<div style="position:absolute;left:1144px;top:262px;font-size:11.4px;line-height:13px;color:#000;white-space:nowrap;">Unter-</div>
<div style="position:absolute;left:1144px;top:277px;font-size:11.4px;line-height:13px;color:#000;white-space:nowrap;">richt</div>
<div style="position:absolute;left:1215px;top:262px;font-size:11.4px;line-height:13px;color:#000;white-space:nowrap;">Gesamt</div>
<div style="position:absolute;left:12px;top:293px;width:1274px;height:352px;overflow:hidden">
<div style="position:absolute;left:0;top:0px;width:1274px;height:17px;background:#e8e8f0;box-shadow:inset 0 1px 0 rgba(255,255,255,.25),inset 0 -1px 0 rgba(255,255,255,.25)"></div>
<div style="position:absolute;left:0;top:17px;width:1274px;height:1px;background:#ababb4"></div>
<div style="position:absolute;left:1px;top:1px;font-size:11.4px;line-height:17px;white-space:nowrap">B</div>
<div style="position:absolute;left:72px;top:1px;font-size:11.4px;line-height:17px;white-space:nowrap">Biologie</div>
<div style="position:absolute;right:929px;top:1px;font-size:11.4px;line-height:17px;white-space:nowrap">6</div>
<div style="position:absolute;right:574px;top:1px;font-size:11.4px;line-height:17px;white-space:nowrap">6</div>
<div style="position:absolute;right:500px;top:1px;font-size:11.4px;line-height:17px;white-space:nowrap">6</div>
<div style="position:absolute;left:0;top:18px;width:1274px;height:17px;background:#cad9f5;box-shadow:inset 0 1px 0 rgba(255,255,255,.25),inset 0 -1px 0 rgba(255,255,255,.25)"></div>
<div style="position:absolute;left:0;top:35px;width:1274px;height:1px;background:#ababb4"></div>
<div style="position:absolute;left:1px;top:19px;font-size:11.4px;line-height:17px;white-space:nowrap">B-A</div>
<div style="position:absolute;left:72px;top:19px;font-size:11.4px;line-height:17px;white-space:nowrap">Aspekte der Biologie</div>
<div style="position:absolute;left:0;top:36px;width:1274px;height:17px;background:#e8e8f0;box-shadow:inset 0 1px 0 rgba(255,255,255,.25),inset 0 -1px 0 rgba(255,255,255,.25)"></div>
<div style="position:absolute;left:0;top:53px;width:1274px;height:1px;background:#ababb4"></div>
<div style="position:absolute;left:1px;top:37px;font-size:11.4px;line-height:17px;white-space:nowrap">Bte</div>
<div style="position:absolute;left:72px;top:37px;font-size:11.4px;line-height:17px;white-space:nowrap">Biotechnologie</div>
<div style="position:absolute;left:0;top:54px;width:1274px;height:17px;background:#cad9f5;box-shadow:inset 0 1px 0 rgba(255,255,255,.25),inset 0 -1px 0 rgba(255,255,255,.25)"></div>
<div style="position:absolute;left:0;top:71px;width:1274px;height:1px;background:#ababb4"></div>
<div style="position:absolute;left:1px;top:55px;font-size:11.4px;line-height:17px;white-space:nowrap">BwR</div>
<div style="position:absolute;left:72px;top:55px;font-size:11.4px;line-height:17px;white-space:nowrap">BWL mit Rechnungswesen</div>
<div style="position:absolute;right:929px;top:55px;font-size:11.4px;line-height:17px;white-space:nowrap">32</div>
<div style="position:absolute;right:645px;top:55px;font-size:11.4px;line-height:17px;white-space:nowrap">2</div>
<div style="position:absolute;right:574px;top:55px;font-size:11.4px;line-height:17px;white-space:nowrap">34</div>
<div style="position:absolute;right:500px;top:55px;font-size:11.4px;line-height:17px;white-space:nowrap">16</div>
<div style="position:absolute;right:429px;top:55px;font-size:11.4px;line-height:17px;white-space:nowrap">5</div>
<div style="position:absolute;right:216px;top:55px;font-size:11.4px;line-height:17px;white-space:nowrap">1</div>
<div style="position:absolute;right:143px;top:55px;font-size:11.4px;line-height:17px;white-space:nowrap">12</div>
<div style="position:absolute;right:2px;top:55px;font-size:11.4px;line-height:17px;white-space:nowrap">12</div>
<div style="position:absolute;left:0;top:72px;width:1274px;height:17px;background:#e8e8f0;box-shadow:inset 0 1px 0 rgba(255,255,255,.25),inset 0 -1px 0 rgba(255,255,255,.25)"></div>
<div style="position:absolute;left:0;top:89px;width:1274px;height:1px;background:#ababb4"></div>
<div style="position:absolute;left:1px;top:73px;font-size:11.4px;line-height:17px;white-space:nowrap">C</div>
<div style="position:absolute;left:72px;top:73px;font-size:11.4px;line-height:17px;white-space:nowrap">Chemie</div>
<div style="position:absolute;right:929px;top:73px;font-size:11.4px;line-height:17px;white-space:nowrap">4</div>
<div style="position:absolute;right:574px;top:73px;font-size:11.4px;line-height:17px;white-space:nowrap">4</div>
<div style="position:absolute;right:500px;top:73px;font-size:11.4px;line-height:17px;white-space:nowrap">4</div>
<div style="position:absolute;left:0;top:90px;width:1274px;height:17px;background:#cad9f5;box-shadow:inset 0 1px 0 rgba(255,255,255,.25),inset 0 -1px 0 rgba(255,255,255,.25)"></div>
<div style="position:absolute;left:0;top:107px;width:1274px;height:1px;background:#ababb4"></div>
<div style="position:absolute;left:1px;top:91px;font-size:11.4px;line-height:17px;white-space:nowrap">C-A</div>
<div style="position:absolute;left:72px;top:91px;font-size:11.4px;line-height:17px;white-space:nowrap">Aspekte der Chemie</div>
<div style="position:absolute;left:0;top:108px;width:1274px;height:17px;background:#e8e8f0;box-shadow:inset 0 1px 0 rgba(255,255,255,.25),inset 0 -1px 0 rgba(255,255,255,.25)"></div>
<div style="position:absolute;left:0;top:125px;width:1274px;height:1px;background:#ababb4"></div>
<div style="position:absolute;left:1px;top:109px;font-size:11.4px;line-height:17px;white-space:nowrap">Cho</div>
<div style="position:absolute;left:72px;top:109px;font-size:11.4px;line-height:17px;white-space:nowrap">Chor</div>
<div style="position:absolute;left:0;top:126px;width:1274px;height:17px;background:#cad9f5;box-shadow:inset 0 1px 0 rgba(255,255,255,.25),inset 0 -1px 0 rgba(255,255,255,.25)"></div>
<div style="position:absolute;left:0;top:143px;width:1274px;height:1px;background:#ababb4"></div>
<div style="position:absolute;left:1px;top:127px;font-size:11.4px;line-height:17px;white-space:nowrap">D</div>
<div style="position:absolute;left:72px;top:127px;font-size:11.4px;line-height:17px;white-space:nowrap">Deutsch</div>
<div style="position:absolute;right:929px;top:127px;font-size:11.4px;line-height:17px;white-space:nowrap">35</div>
<div style="position:absolute;right:574px;top:127px;font-size:11.4px;line-height:17px;white-space:nowrap">35</div>
<div style="position:absolute;right:500px;top:127px;font-size:11.4px;line-height:17px;white-space:nowrap">31</div>
<div style="position:absolute;right:216px;top:127px;font-size:11.4px;line-height:17px;white-space:nowrap">4</div>
<div style="position:absolute;left:0;top:144px;width:1274px;height:17px;background:#e8e8f0;box-shadow:inset 0 1px 0 rgba(255,255,255,.25),inset 0 -1px 0 rgba(255,255,255,.25)"></div>
<div style="position:absolute;left:0;top:161px;width:1274px;height:1px;background:#ababb4"></div>
<div style="position:absolute;left:1px;top:145px;font-size:11.4px;line-height:17px;white-space:nowrap">E</div>
<div style="position:absolute;left:72px;top:145px;font-size:11.4px;line-height:17px;white-space:nowrap">Englisch</div>
<div style="position:absolute;right:929px;top:145px;font-size:11.4px;line-height:17px;white-space:nowrap">39</div>
<div style="position:absolute;right:858px;top:145px;font-size:11.4px;line-height:17px;white-space:nowrap">2</div>
<div style="position:absolute;right:645px;top:145px;font-size:11.4px;line-height:17px;white-space:nowrap">2</div>
<div style="position:absolute;right:574px;top:145px;font-size:11.4px;line-height:17px;white-space:nowrap">41</div>
<div style="position:absolute;right:500px;top:145px;font-size:11.4px;line-height:17px;white-space:nowrap">25</div>
<div style="position:absolute;right:429px;top:145px;font-size:11.4px;line-height:17px;white-space:nowrap">12</div>
<div style="position:absolute;right:216px;top:145px;font-size:11.4px;line-height:17px;white-space:nowrap">4</div>
<div style="position:absolute;left:0;top:162px;width:1274px;height:17px;background:#cad9f5;box-shadow:inset 0 1px 0 rgba(255,255,255,.25),inset 0 -1px 0 rgba(255,255,255,.25)"></div>
<div style="position:absolute;left:0;top:179px;width:1274px;height:1px;background:#ababb4"></div>
<div style="position:absolute;left:1px;top:163px;font-size:11.4px;line-height:17px;white-space:nowrap">EBC</div>
<div style="position:absolute;left:72px;top:163px;font-size:11.4px;line-height:17px;white-space:nowrap">English Book Club</div>
<div style="position:absolute;right:929px;top:163px;font-size:11.4px;line-height:17px;white-space:nowrap">2</div>
<div style="position:absolute;right:574px;top:163px;font-size:11.4px;line-height:17px;white-space:nowrap">2</div>
<div style="position:absolute;right:500px;top:163px;font-size:11.4px;line-height:17px;white-space:nowrap">2</div>
<div style="position:absolute;left:0;top:180px;width:1274px;height:17px;background:#e8e8f0;box-shadow:inset 0 1px 0 rgba(255,255,255,.25),inset 0 -1px 0 rgba(255,255,255,.25)"></div>
<div style="position:absolute;left:0;top:197px;width:1274px;height:1px;background:#ababb4"></div>
<div style="position:absolute;left:1px;top:181px;font-size:11.4px;line-height:17px;white-space:nowrap">Eth</div>
<div style="position:absolute;left:72px;top:181px;font-size:11.4px;line-height:17px;white-space:nowrap">Ethik</div>
<div style="position:absolute;right:929px;top:181px;font-size:11.4px;line-height:17px;white-space:nowrap">12</div>
<div style="position:absolute;right:645px;top:181px;font-size:11.4px;line-height:17px;white-space:nowrap">2</div>
<div style="position:absolute;right:574px;top:181px;font-size:11.4px;line-height:17px;white-space:nowrap">14</div>
<div style="position:absolute;right:500px;top:181px;font-size:11.4px;line-height:17px;white-space:nowrap">4</div>
<div style="position:absolute;right:429px;top:181px;font-size:11.4px;line-height:17px;white-space:nowrap">8</div>
<div style="position:absolute;right:216px;top:181px;font-size:11.4px;line-height:17px;white-space:nowrap">2</div>
<div style="position:absolute;left:0;top:198px;width:1274px;height:17px;background:#cad9f5;box-shadow:inset 0 1px 0 rgba(255,255,255,.25),inset 0 -1px 0 rgba(255,255,255,.25)"></div>
<div style="position:absolute;left:0;top:215px;width:1274px;height:1px;background:#ababb4"></div>
<div style="position:absolute;left:1px;top:199px;font-size:11.4px;line-height:17px;white-space:nowrap">Ev</div>
<div style="position:absolute;left:72px;top:199px;font-size:11.4px;line-height:17px;white-space:nowrap">Evangelische Religionslehre</div>
<div style="position:absolute;right:929px;top:199px;font-size:11.4px;line-height:17px;white-space:nowrap">6</div>
<div style="position:absolute;right:574px;top:199px;font-size:11.4px;line-height:17px;white-space:nowrap">6</div>
<div style="position:absolute;right:143px;top:199px;font-size:11.4px;line-height:17px;white-space:nowrap">6</div>
<div style="position:absolute;right:2px;top:199px;font-size:11.4px;line-height:17px;white-space:nowrap">6</div>
<div style="position:absolute;left:0;top:216px;width:1274px;height:17px;background:#e8e8f0;box-shadow:inset 0 1px 0 rgba(255,255,255,.25),inset 0 -1px 0 rgba(255,255,255,.25)"></div>
<div style="position:absolute;left:0;top:233px;width:1274px;height:1px;background:#ababb4"></div>
<div style="position:absolute;left:1px;top:217px;font-size:11.4px;line-height:17px;white-space:nowrap">ExG</div>
<div style="position:absolute;left:72px;top:217px;font-size:11.4px;line-height:17px;white-space:nowrap">Experimentelles Gestalten</div>
<div style="position:absolute;left:0;top:234px;width:1274px;height:17px;background:#cad9f5;box-shadow:inset 0 1px 0 rgba(255,255,255,.25),inset 0 -1px 0 rgba(255,255,255,.25)"></div>
<div style="position:absolute;left:0;top:251px;width:1274px;height:1px;background:#ababb4"></div>
<div style="position:absolute;left:1px;top:235px;font-size:11.4px;line-height:17px;white-space:nowrap">F</div>
<div style="position:absolute;left:72px;top:235px;font-size:11.4px;line-height:17px;white-space:nowrap">Französisch</div>
<div style="position:absolute;left:0;top:252px;width:1274px;height:17px;background:#e8e8f0;box-shadow:inset 0 1px 0 rgba(255,255,255,.25),inset 0 -1px 0 rgba(255,255,255,.25)"></div>
<div style="position:absolute;left:0;top:269px;width:1274px;height:1px;background:#ababb4"></div>
<div style="position:absolute;left:1px;top:253px;font-size:11.4px;line-height:17px;white-space:nowrap">FiwA</div>
<div style="position:absolute;left:72px;top:253px;font-size:11.4px;line-height:17px;white-space:nowrap">Französisch IW (Anfänger)</div>
<div style="position:absolute;left:0;top:270px;width:1274px;height:17px;background:#cad9f5;box-shadow:inset 0 1px 0 rgba(255,255,255,.25),inset 0 -1px 0 rgba(255,255,255,.25)"></div>
<div style="position:absolute;left:0;top:287px;width:1274px;height:1px;background:#ababb4"></div>
<div style="position:absolute;left:1px;top:271px;font-size:11.4px;line-height:17px;white-space:nowrap">Fot</div>
<div style="position:absolute;left:72px;top:271px;font-size:11.4px;line-height:17px;white-space:nowrap">Fotografie</div>
<div style="position:absolute;left:0;top:288px;width:1274px;height:17px;background:#e8e8f0;box-shadow:inset 0 1px 0 rgba(255,255,255,.25),inset 0 -1px 0 rgba(255,255,255,.25)"></div>
<div style="position:absolute;left:0;top:305px;width:1274px;height:1px;background:#ababb4"></div>
<div style="position:absolute;left:1px;top:289px;font-size:11.4px;line-height:17px;white-space:nowrap">fpAn</div>
<div style="position:absolute;left:72px;top:289px;font-size:11.4px;line-height:17px;white-space:nowrap">fachpraktische Anleitung</div>
<div style="position:absolute;right:929px;top:289px;font-size:11.4px;line-height:17px;white-space:nowrap">3</div>
<div style="position:absolute;right:574px;top:289px;font-size:11.4px;line-height:17px;white-space:nowrap">3</div>
<div style="position:absolute;right:500px;top:289px;font-size:11.4px;line-height:17px;white-space:nowrap">2</div>
<div style="position:absolute;right:429px;top:289px;font-size:11.4px;line-height:17px;white-space:nowrap">1</div>
<div style="position:absolute;left:0;top:306px;width:1274px;height:17px;background:#cad9f5;box-shadow:inset 0 1px 0 rgba(255,255,255,.25),inset 0 -1px 0 rgba(255,255,255,.25)"></div>
<div style="position:absolute;left:0;top:323px;width:1274px;height:1px;background:#ababb4"></div>
<div style="position:absolute;left:1px;top:307px;font-size:11.4px;line-height:17px;white-space:nowrap">fpV</div>
<div style="position:absolute;left:72px;top:307px;font-size:11.4px;line-height:17px;white-space:nowrap">fachpraktische Vertiefung</div>
<div style="position:absolute;right:929px;top:307px;font-size:11.4px;line-height:17px;white-space:nowrap">3</div>
<div style="position:absolute;right:574px;top:307px;font-size:11.4px;line-height:17px;white-space:nowrap">3</div>
<div style="position:absolute;right:500px;top:307px;font-size:11.4px;line-height:17px;white-space:nowrap">2</div>
<div style="position:absolute;right:429px;top:307px;font-size:11.4px;line-height:17px;white-space:nowrap">1</div>
<div style="position:absolute;left:0;top:324px;width:1274px;height:17px;background:#e8e8f0;box-shadow:inset 0 1px 0 rgba(255,255,255,.25),inset 0 -1px 0 rgba(255,255,255,.25)"></div>
<div style="position:absolute;left:0;top:341px;width:1274px;height:1px;background:#ababb4"></div>
<div style="position:absolute;left:1px;top:325px;font-size:11.4px;line-height:17px;white-space:nowrap">G</div>
<div style="position:absolute;left:72px;top:325px;font-size:11.4px;line-height:17px;white-space:nowrap">Geschichte</div>
<div style="position:absolute;right:929px;top:325px;font-size:11.4px;line-height:17px;white-space:nowrap">6</div>
<div style="position:absolute;right:574px;top:325px;font-size:11.4px;line-height:17px;white-space:nowrap">6</div>
<div style="position:absolute;right:500px;top:325px;font-size:11.4px;line-height:17px;white-space:nowrap">2</div>
<div style="position:absolute;right:429px;top:325px;font-size:11.4px;line-height:17px;white-space:nowrap">4</div>
<div style="position:absolute;left:0;top:342px;width:1274px;height:17px;background:#cad9f5;box-shadow:inset 0 1px 0 rgba(255,255,255,.25),inset 0 -1px 0 rgba(255,255,255,.25)"></div>
<div style="position:absolute;left:0;top:359px;width:1274px;height:1px;background:#ababb4"></div>
<div style="position:absolute;left:1px;top:343px;font-size:11.4px;line-height:17px;white-space:nowrap">GeS</div>
<div style="position:absolute;left:72px;top:343px;font-size:11.4px;line-height:17px;white-space:nowrap">Spektrum der Gesundheit</div>
<div style="position:absolute;left:69px;top:0;width:3px;height:352px;background:repeating-linear-gradient(to bottom,rgba(255,255,255,.25) 0 17px,transparent 17px 18px)"></div>
<div style="position:absolute;left:70px;top:0;width:1px;height:352px;background:#ababb4"></div>
<div style="position:absolute;left:271px;top:0;width:3px;height:352px;background:repeating-linear-gradient(to bottom,rgba(255,255,255,.25) 0 17px,transparent 17px 18px)"></div>
<div style="position:absolute;left:272px;top:0;width:1px;height:352px;background:#ababb4"></div>
<div style="position:absolute;left:274px;top:0;width:3px;height:352px;background:repeating-linear-gradient(to bottom,rgba(255,255,255,.25) 0 17px,transparent 17px 18px)"></div>
<div style="position:absolute;left:275px;top:0;width:1px;height:352px;background:#ababb4"></div>
<div style="position:absolute;left:345px;top:0;width:3px;height:352px;background:repeating-linear-gradient(to bottom,rgba(255,255,255,.25) 0 17px,transparent 17px 18px)"></div>
<div style="position:absolute;left:346px;top:0;width:1px;height:352px;background:#ababb4"></div>
<div style="position:absolute;left:416px;top:0;width:3px;height:352px;background:repeating-linear-gradient(to bottom,rgba(255,255,255,.25) 0 17px,transparent 17px 18px)"></div>
<div style="position:absolute;left:417px;top:0;width:1px;height:352px;background:#ababb4"></div>
<div style="position:absolute;left:487px;top:0;width:3px;height:352px;background:repeating-linear-gradient(to bottom,rgba(255,255,255,.25) 0 17px,transparent 17px 18px)"></div>
<div style="position:absolute;left:488px;top:0;width:1px;height:352px;background:#ababb4"></div>
<div style="position:absolute;left:558px;top:0;width:3px;height:352px;background:repeating-linear-gradient(to bottom,rgba(255,255,255,.25) 0 17px,transparent 17px 18px)"></div>
<div style="position:absolute;left:559px;top:0;width:1px;height:352px;background:#ababb4"></div>
<div style="position:absolute;left:629px;top:0;width:3px;height:352px;background:repeating-linear-gradient(to bottom,rgba(255,255,255,.25) 0 17px,transparent 17px 18px)"></div>
<div style="position:absolute;left:630px;top:0;width:1px;height:352px;background:#ababb4"></div>
<div style="position:absolute;left:700px;top:0;width:3px;height:352px;background:repeating-linear-gradient(to bottom,rgba(255,255,255,.25) 0 17px,transparent 17px 18px)"></div>
<div style="position:absolute;left:701px;top:0;width:1px;height:352px;background:#ababb4"></div>
<div style="position:absolute;left:703px;top:0;width:3px;height:352px;background:repeating-linear-gradient(to bottom,rgba(255,255,255,.25) 0 17px,transparent 17px 18px)"></div>
<div style="position:absolute;left:704px;top:0;width:1px;height:352px;background:#ababb4"></div>
<div style="position:absolute;left:774px;top:0;width:3px;height:352px;background:repeating-linear-gradient(to bottom,rgba(255,255,255,.25) 0 17px,transparent 17px 18px)"></div>
<div style="position:absolute;left:775px;top:0;width:1px;height:352px;background:#ababb4"></div>
<div style="position:absolute;left:845px;top:0;width:3px;height:352px;background:repeating-linear-gradient(to bottom,rgba(255,255,255,.25) 0 17px,transparent 17px 18px)"></div>
<div style="position:absolute;left:846px;top:0;width:1px;height:352px;background:#ababb4"></div>
<div style="position:absolute;left:916px;top:0;width:3px;height:352px;background:repeating-linear-gradient(to bottom,rgba(255,255,255,.25) 0 17px,transparent 17px 18px)"></div>
<div style="position:absolute;left:917px;top:0;width:1px;height:352px;background:#ababb4"></div>
<div style="position:absolute;left:987px;top:0;width:3px;height:352px;background:repeating-linear-gradient(to bottom,rgba(255,255,255,.25) 0 17px,transparent 17px 18px)"></div>
<div style="position:absolute;left:988px;top:0;width:1px;height:352px;background:#ababb4"></div>
<div style="position:absolute;left:1058px;top:0;width:3px;height:352px;background:repeating-linear-gradient(to bottom,rgba(255,255,255,.25) 0 17px,transparent 17px 18px)"></div>
<div style="position:absolute;left:1059px;top:0;width:1px;height:352px;background:#ababb4"></div>
<div style="position:absolute;left:1061px;top:0;width:3px;height:352px;background:repeating-linear-gradient(to bottom,rgba(255,255,255,.25) 0 17px,transparent 17px 18px)"></div>
<div style="position:absolute;left:1062px;top:0;width:1px;height:352px;background:#ababb4"></div>
<div style="position:absolute;left:1131px;top:0;width:3px;height:352px;background:repeating-linear-gradient(to bottom,rgba(255,255,255,.25) 0 17px,transparent 17px 18px)"></div>
<div style="position:absolute;left:1132px;top:0;width:1px;height:352px;background:#ababb4"></div>
<div style="position:absolute;left:1202px;top:0;width:3px;height:352px;background:repeating-linear-gradient(to bottom,rgba(255,255,255,.25) 0 17px,transparent 17px 18px)"></div>
<div style="position:absolute;left:1203px;top:0;width:1px;height:352px;background:#ababb4"></div>
</div>
<div style="position:absolute;left:1286px;top:200px;width:17px;height:93px;background:linear-gradient(#ffffff,#e4e4ec 50%,#c8c8d2);border:1.5px solid #2a4e86;border-radius:3px"></div>
<svg style="position:absolute;left:1290px;top:241px" width="12" height="12" viewBox="0 0 12 12"><path d="M0.5 9.5 V0.5 H8.5 V5" fill="none" stroke="#000"/><line x1="0.5" y1="3" x2="8.5" y2="3" stroke="#000" stroke-width="1.2"/><line x1="4.5" y1="0.5" x2="4.5" y2="5.5" stroke="#000"/><line x1="0.5" y1="9.5" x2="4" y2="9.5" stroke="#000"/><path d="M4 6 L11.5 6 L7.75 10.5 Z" fill="#000"/></svg>
<div style="position:absolute;left:1287px;top:293px;width:16px;height:352px;background:#fafafe"></div>
<div style="position:absolute;left:1287px;top:294px;width:16px;height:16px;background:linear-gradient(#f0f4fc,#b8c8e8);border:1px solid #c0cce0;border-radius:2px"></div>
<svg style="position:absolute;left:1290px;top:297px" width="10" height="8" viewBox="0 0 10 8"><path d="M1 6 L5 2 L9 6" stroke="#4a6890" stroke-width="2" fill="none"/></svg>
<div style="position:absolute;left:1288px;top:311px;width:14px;height:114px;background:linear-gradient(90deg,#c8d8f4,#dde8fa 50%,#b8cbee);border:1px solid #a8bce0;border-radius:2px"></div>
<svg style="position:absolute;left:1291px;top:362px" width="8" height="8" viewBox="0 0 8 8"><g stroke="#8aa0c8"><line x1="0" y1="1.5" x2="8" y2="1.5"/><line x1="0" y1="3.5" x2="8" y2="3.5"/><line x1="0" y1="5.5" x2="8" y2="5.5"/></g></svg>
<div style="position:absolute;left:1287px;top:628px;width:16px;height:17px;background:linear-gradient(#f0f4fc,#b8c8e8);border:1px solid #c0cce0;border-radius:2px"></div>
<svg style="position:absolute;left:1290px;top:632px" width="10" height="8" viewBox="0 0 10 8"><path d="M1 2 L5 6 L9 2" stroke="#4a6890" stroke-width="2" fill="none"/></svg>
<div style="position:absolute;left:287px;top:646px;width:71px;height:20px;background:#ccffff;border:1px solid #7f9abf;border-left-width:2px;border-right-width:0px;"></div>
<div style="position:absolute;right:1083px;top:650px;font-size:11.4px;line-height:13px;color:#000;white-space:nowrap;text-align:right;">316</div>
<div style="position:absolute;left:358px;top:646px;width:71px;height:20px;background:#f4f4fc;border:1px solid #7f9abf;border-left-width:2px;border-right-width:0px;box-shadow:inset 1px 1px 0 #fcfcff;"></div>
<div style="position:absolute;right:1012px;top:650px;font-size:11.4px;line-height:13px;color:#000;white-space:nowrap;text-align:right;">5</div>
<div style="position:absolute;left:429px;top:646px;width:71px;height:20px;background:#f4f4fc;border:1px solid #7f9abf;border-left-width:2px;border-right-width:0px;box-shadow:inset 1px 1px 0 #fcfcff;"></div>
<div style="position:absolute;left:500px;top:646px;width:71px;height:20px;background:#ccffff;border:1px solid #7f9abf;border-left-width:2px;border-right-width:0px;"></div>
<div style="position:absolute;right:870px;top:650px;font-size:11.4px;line-height:13px;color:#000;white-space:nowrap;text-align:right;">0</div>
<div style="position:absolute;left:571px;top:646px;width:71px;height:20px;background:#ccffff;border:1px solid #7f9abf;border-left-width:2px;border-right-width:0px;"></div>
<div style="position:absolute;right:799px;top:650px;font-size:11.4px;line-height:13px;color:#000;white-space:nowrap;text-align:right;">10</div>
<div style="position:absolute;left:642px;top:646px;width:72px;height:20px;background:#66ffff;border:1px solid #7f9abf;border-left-width:2px;border-right-width:1px;"></div>
<div style="position:absolute;right:728px;top:650px;font-size:11.4px;line-height:13px;color:#000;white-space:nowrap;text-align:right;">326</div>
<div style="position:absolute;left:716px;top:646px;width:71px;height:20px;background:#f4f4fc;border:1px solid #7f9abf;border-left-width:2px;border-right-width:0px;box-shadow:inset 1px 1px 0 #fcfcff;"></div>
<div style="position:absolute;right:654px;top:650px;font-size:11.4px;line-height:13px;color:#000;white-space:nowrap;text-align:right;">175</div>
<div style="position:absolute;left:787px;top:646px;width:71px;height:20px;background:#f4f4fc;border:1px solid #7f9abf;border-left-width:2px;border-right-width:0px;box-shadow:inset 1px 1px 0 #fcfcff;"></div>
<div style="position:absolute;right:583px;top:650px;font-size:11.4px;line-height:13px;color:#000;white-space:nowrap;text-align:right;">99</div>
<div style="position:absolute;left:858px;top:646px;width:71px;height:20px;background:#f4f4fc;border:1px solid #7f9abf;border-left-width:2px;border-right-width:0px;box-shadow:inset 1px 1px 0 #fcfcff;"></div>
<div style="position:absolute;right:512px;top:650px;font-size:11.4px;line-height:13px;color:#000;white-space:nowrap;text-align:right;">0</div>
<div style="position:absolute;left:929px;top:646px;width:71px;height:20px;background:#f4f4fc;border:1px solid #7f9abf;border-left-width:2px;border-right-width:0px;box-shadow:inset 1px 1px 0 #fcfcff;"></div>
<div style="position:absolute;right:441px;top:650px;font-size:11.4px;line-height:13px;color:#000;white-space:nowrap;text-align:right;">0</div>
<div style="position:absolute;left:1000px;top:646px;width:72px;height:20px;background:#f4f4fc;border:1px solid #7f9abf;border-left-width:2px;border-right-width:1px;box-shadow:inset 1px 1px 0 #fcfcff;"></div>
<div style="position:absolute;right:370px;top:650px;font-size:11.4px;line-height:13px;color:#000;white-space:nowrap;text-align:right;">23</div>
<div style="position:absolute;left:1074px;top:646px;width:70px;height:20px;background:#f4f4fc;border:1px solid #7f9abf;border-left-width:2px;border-right-width:0px;box-shadow:inset 1px 1px 0 #fcfcff;"></div>
<div style="position:absolute;right:297px;top:650px;font-size:11.4px;line-height:13px;color:#000;white-space:nowrap;text-align:right;">29</div>
<div style="position:absolute;left:1144px;top:646px;width:71px;height:20px;background:#f4f4fc;border:1px solid #7f9abf;border-left-width:2px;border-right-width:0px;box-shadow:inset 1px 1px 0 #fcfcff;"></div>
<div style="position:absolute;right:226px;top:650px;font-size:11.4px;line-height:13px;color:#000;white-space:nowrap;text-align:right;">0</div>
<div style="position:absolute;left:1215px;top:646px;width:71px;height:20px;background:#f4f4fc;border:1px solid #7f9abf;border-left-width:2px;border-right-width:1px;box-shadow:inset 1px 1px 0 #fcfcff;"></div>
<div style="position:absolute;right:155px;top:650px;font-size:11.4px;line-height:13px;color:#000;white-space:nowrap;text-align:right;">29</div>
<div style="position:absolute;left:1316px;top:234px;width:99px;height:1px;background:#a4a4ac"></div>
<div style="position:absolute;left:1316px;top:234px;width:1px;height:147px;background:#a4a4ac"></div>
<div style="position:absolute;left:1317px;top:235px;width:98px;height:40px;background:#f1f1fd"></div>
<div style="position:absolute;left:1320px;top:238px;font-size:10.6px;line-height:12px;color:#000;font-weight:bold;white-space:nowrap;">Zusatzstd</div>
<div style="position:absolute;left:1413px;top:240px;width:1px;height:14px;background:#c8c8d0"></div>
<div style="position:absolute;left:1317px;top:253px;width:98px;height:1px;background:#dcdce4"></div>
<div style="position:absolute;left:1317px;top:254px;width:98px;height:1px;background:#c4c4cc"></div>
<div style="position:absolute;left:1317px;top:255px;width:98px;height:1px;background:#e4e4ec"></div>
<div style="position:absolute;left:1317px;top:261px;font-size:11.4px;line-height:13px;color:#000;white-space:nowrap;">Art</div>
<div style="position:absolute;left:1364px;top:260px;width:1px;height:14px;background:#c8c8d0"></div>
<div style="position:absolute;left:1413px;top:260px;width:1px;height:14px;background:#c8c8d0"></div>
<div style="position:absolute;left:1317px;top:274px;width:98px;height:1px;background:#dcdce4"></div>
<div style="position:absolute;left:1317px;top:275px;width:98px;height:1px;background:#c4c4cc"></div>
<div style="position:absolute;left:1317px;top:276px;width:98px;height:1px;background:#e4e4ec"></div>
<div style="position:absolute;left:1317px;top:277px;width:98px;height:104px;background:#e8e8f0"></div>
<div style="position:absolute;left:1365px;top:261px;font-size:11.4px;line-height:13px;color:#000;white-space:nowrap;">WStd</div>
<div style="position:absolute;left:1317px;top:294px;width:98px;height:1px;background:#ababb4"></div>
<div style="position:absolute;left:1365px;top:277px;width:1px;height:17px;background:#ababb4"></div>
<div style="position:absolute;left:1318px;top:280px;font-size:11.4px;line-height:13px;color:#000;white-space:nowrap;">T</div>
<div style="position:absolute;right:24px;top:280px;font-size:11.4px;line-height:13px;color:#000;white-space:nowrap;text-align:right;">5</div>
<div style="position:absolute;left:1316px;top:402px;width:99px;height:1px;background:#a4a4ac"></div>
<div style="position:absolute;left:1316px;top:402px;width:1px;height:147px;background:#a4a4ac"></div>
<div style="position:absolute;left:1317px;top:403px;width:98px;height:40px;background:#f1f1fd"></div>
<div style="position:absolute;left:1320px;top:406px;font-size:10.6px;line-height:12px;color:#000;font-weight:bold;white-space:nowrap;">Kürzungen</div>
<div style="position:absolute;left:1413px;top:408px;width:1px;height:14px;background:#c8c8d0"></div>
<div style="position:absolute;left:1317px;top:421px;width:98px;height:1px;background:#dcdce4"></div>
<div style="position:absolute;left:1317px;top:422px;width:98px;height:1px;background:#c4c4cc"></div>
<div style="position:absolute;left:1317px;top:423px;width:98px;height:1px;background:#e4e4ec"></div>
<div style="position:absolute;left:1317px;top:429px;font-size:11.4px;line-height:13px;color:#000;white-space:nowrap;">Art</div>
<div style="position:absolute;left:1364px;top:428px;width:1px;height:14px;background:#c8c8d0"></div>
<div style="position:absolute;left:1413px;top:428px;width:1px;height:14px;background:#c8c8d0"></div>
<div style="position:absolute;left:1317px;top:442px;width:98px;height:1px;background:#dcdce4"></div>
<div style="position:absolute;left:1317px;top:443px;width:98px;height:1px;background:#c4c4cc"></div>
<div style="position:absolute;left:1317px;top:444px;width:98px;height:1px;background:#e4e4ec"></div>
<div style="position:absolute;left:1317px;top:445px;width:98px;height:104px;background:#e8e8f0"></div>
<div style="position:absolute;left:1365px;top:429px;font-size:11.4px;line-height:13px;color:#000;white-space:nowrap;">WStd</div>
<div style="position:absolute;left:11px;top:684px;width:8px;height:1px;background:#b8b8c0"></div>
<div style="position:absolute;left:23px;top:678px;font-size:11.7px;line-height:14px;color:#000;white-space:nowrap;">Weitere budgetrelevante Stunden</div>
<div style="position:absolute;left:201px;top:684px;width:387px;height:1px;background:#b8b8c0"></div>
<div style="position:absolute;left:600px;top:684px;width:9px;height:1px;background:#b8b8c0"></div>
<div style="position:absolute;left:612px;top:678px;font-size:11.0px;line-height:13px;color:#000;white-space:nowrap;">Gesamtbedarf</div>
<div style="position:absolute;left:687px;top:684px;width:163px;height:1px;background:#b8b8c0"></div>
<div style="position:absolute;left:17px;top:695px;width:547px;height:1px;background:#a4a4ac"></div>
<div style="position:absolute;left:17px;top:695px;width:1px;height:87px;background:#a4a4ac"></div>
<div style="position:absolute;left:18px;top:696px;width:546px;height:20px;background:#f1f1fd"></div>
<div style="position:absolute;left:18px;top:714px;width:546px;height:1px;background:#dcdce4"></div>
<div style="position:absolute;left:18px;top:715px;width:546px;height:1px;background:#c4c4cc"></div>
<div style="position:absolute;left:18px;top:716px;width:546px;height:1px;background:#e4e4ec"></div>
<div style="position:absolute;left:198px;top:699px;width:1px;height:14px;background:#c8c8d0"></div>
<div style="position:absolute;left:380px;top:699px;width:1px;height:14px;background:#c8c8d0"></div>
<div style="position:absolute;left:18px;top:701px;font-size:11.4px;line-height:13px;color:#000;white-space:nowrap;">Art</div>
<div style="position:absolute;left:200px;top:701px;font-size:11.4px;line-height:13px;color:#000;white-space:nowrap;">geplant</div>
<div style="position:absolute;left:383px;top:701px;font-size:11.4px;line-height:13px;color:#000;white-space:nowrap;">Offener Bedarf</div>
<div style="position:absolute;left:18px;top:717px;width:546px;height:65px;background:#fff"></div>
<div style="position:absolute;left:18px;top:717px;width:546px;height:17px;background:#e8e8f0"></div>
<div style="position:absolute;left:381px;top:717px;width:183px;height:17px;background:#fff"></div>
<div style="position:absolute;left:18px;top:734px;width:546px;height:1px;background:#ababb4"></div>
<div style="position:absolute;left:199px;top:717px;width:1px;height:17px;background:#ababb4"></div>
<div style="position:absolute;left:381px;top:717px;width:1px;height:17px;background:#ababb4"></div>
<div style="position:absolute;left:19px;top:720px;font-size:11.4px;line-height:13px;color:#000;white-space:nowrap;">Einsatz im Vorkurs</div>
<div style="position:absolute;right:1057px;top:720px;font-size:11.4px;line-height:13px;color:#000;white-space:nowrap;text-align:right;">3</div>
<div style="position:absolute;left:18px;top:735px;width:546px;height:17px;background:#cad9f5"></div>
<div style="position:absolute;left:381px;top:735px;width:183px;height:17px;background:#e8f0fc"></div>
<div style="position:absolute;left:18px;top:752px;width:546px;height:1px;background:#ababb4"></div>
<div style="position:absolute;left:199px;top:735px;width:1px;height:17px;background:#ababb4"></div>
<div style="position:absolute;left:381px;top:735px;width:1px;height:17px;background:#ababb4"></div>
<div style="position:absolute;left:19px;top:738px;font-size:11.4px;line-height:13px;color:#000;white-space:nowrap;">fachpraktische Betreuung</div>
<div style="position:absolute;right:1057px;top:738px;font-size:11.4px;line-height:13px;color:#000;white-space:nowrap;text-align:right;">9</div>
<div style="position:absolute;left:18px;top:753px;width:546px;height:17px;background:#e8e8f0"></div>
<div style="position:absolute;left:381px;top:753px;width:183px;height:17px;background:#e8e8f0"></div>
<div style="position:absolute;left:18px;top:770px;width:546px;height:1px;background:#ababb4"></div>
<div style="position:absolute;left:199px;top:753px;width:1px;height:17px;background:#ababb4"></div>
<div style="position:absolute;left:381px;top:753px;width:1px;height:17px;background:#ababb4"></div>
<div style="position:absolute;left:563px;top:717px;width:1px;height:54px;background:#ababb4"></div>
<div style="position:absolute;left:564px;top:696px;width:17px;height:21px;background:linear-gradient(#fafafe,#dcdce6);border:1.5px solid #2a4e86;border-radius:3px"></div>
<svg style="position:absolute;left:568px;top:701px" width="12" height="12" viewBox="0 0 12 12"><path d="M0.5 9.5 V0.5 H8.5 V5" fill="none" stroke="#000"/><line x1="0.5" y1="3" x2="8.5" y2="3" stroke="#000" stroke-width="1.2"/><line x1="4.5" y1="0.5" x2="4.5" y2="5.5" stroke="#000"/><line x1="0.5" y1="9.5" x2="4" y2="9.5" stroke="#000"/><path d="M4 6 L11.5 6 L7.75 10.5 Z" fill="#000"/></svg>
<div style="position:absolute;left:564px;top:717px;width:17px;height:65px;background:#f8f8fc"></div>
<svg style="position:absolute;left:567px;top:722px" width="11" height="8" viewBox="0 0 11 8"><path d="M1 6 L5.5 2 L10 6" stroke="#d8d8e0" stroke-width="2" fill="none"/></svg>
<svg style="position:absolute;left:567px;top:769px" width="11" height="8" viewBox="0 0 11 8"><path d="M1 2 L5.5 6 L10 2" stroke="#d8d8e0" stroke-width="2" fill="none"/></svg>
<div style="position:absolute;left:607px;top:703px;font-size:11.6px;line-height:13px;color:#000;white-space:nowrap;">Unterricht</div>
<div style="position:absolute;right:593px;top:704px;font-size:11.4px;line-height:13px;color:#000;white-space:nowrap;text-align:right;">326,0</div>
<div style="position:absolute;left:607px;top:725px;font-size:11.4px;line-height:13px;color:#000;white-space:nowrap;">Weitere budgetrelevante Stunden</div>
<div style="position:absolute;right:593px;top:725px;font-size:11.4px;line-height:13px;color:#000;white-space:nowrap;text-align:right;">12,0</div>
<div style="position:absolute;left:607px;top:747px;font-size:10.2px;line-height:12px;color:#000;font-weight:bold;white-space:nowrap;">Gesamt</div>
<div style="position:absolute;right:593px;top:747px;font-size:10.6px;line-height:12px;color:#000;font-weight:bold;white-space:nowrap;text-align:right;">338,0</div>
<div style="position:absolute;left:1px;top:796px;width:1435px;height:20px;background:#8ea8c8"></div>
<div style="position:absolute;left:2px;top:797px;width:93px;height:18px;background:#d44f5c;overflow:hidden"><div style="position:absolute;left:3px;top:2px;font-size:11.45px;line-height:14px;color:#fff;white-space:nowrap">Schulleitung, Eva</div></div>
<div style="position:absolute;left:97px;top:797px;width:1123px;height:18px;background:#d44f5c;overflow:hidden"><div style="position:absolute;left:3px;top:2px;font-size:11.45px;line-height:14px;color:#fff;white-space:nowrap">leitung, 5013/Schulleitung, 8221/Schulleitung, 0862/Schulleitung, 9357/Schulleitung, 9359/Schulleitung, 5195/Schulleitung (NR),Schulleitung_Rest, 5017/Schulleitung (NR),Schulleitung_Rest, 0907/Schulleitung, 1175/Schulleitung</div></div>
<div style="position:absolute;left:1222px;top:797px;width:152px;height:18px;background:#d44f5c;overflow:hidden"><div style="position:absolute;left:5px;top:2px;font-size:11.45px;line-height:14px;color:#fff;white-space:nowrap">Aktuelles Schuljahr: 2025/26</div></div>
<div style="position:absolute;left:1376px;top:797px;width:59px;height:18px;background:#d44f5c;overflow:hidden"><div style="position:absolute;left:-2px;top:2px;font-size:11.45px;line-height:14px;color:#fff;white-space:nowrap">06.02.2026</div></div>
<svg style="position:absolute;left:1113px;top:24px;z-index:20" width="14" height="22" viewBox="0 0 14 22"><path d="M1.5 1.5 L1.5 17 L5.3 13.6 L8.2 19.5 L10.6 18.5 L8 13 L12.6 13 Z" fill="#fff" stroke="#000" stroke-width="1" stroke-linejoin="round"/></svg>
<svg style="position:absolute;left:492.5px;top:29.5px;z-index:10" width="30" height="30" viewBox="0 0 30 30"><circle cx="15" cy="15" r="14.7" fill="#0000ff"/><path d="M13.3 5 H16.9 V22.8 H13.3 V10.2 Q11.6 11.6 9.2 12.3 V9.1 Q12 8 13.3 5 Z" fill="#fff"/></svg>
<div style="position:absolute;left:126px;top:125px;width:30px;height:30px;border-radius:50%;background:#0000ff;color:#fff;font-weight:bold;font-size:25px;line-height:30px;text-align:center;z-index:10">2</div>
<div style="position:absolute;left:277px;top:85px;width:30px;height:30px;border-radius:50%;background:#0000ff;color:#fff;font-weight:bold;font-size:25px;line-height:30px;text-align:center;z-index:10">3</div>
</body></html>
